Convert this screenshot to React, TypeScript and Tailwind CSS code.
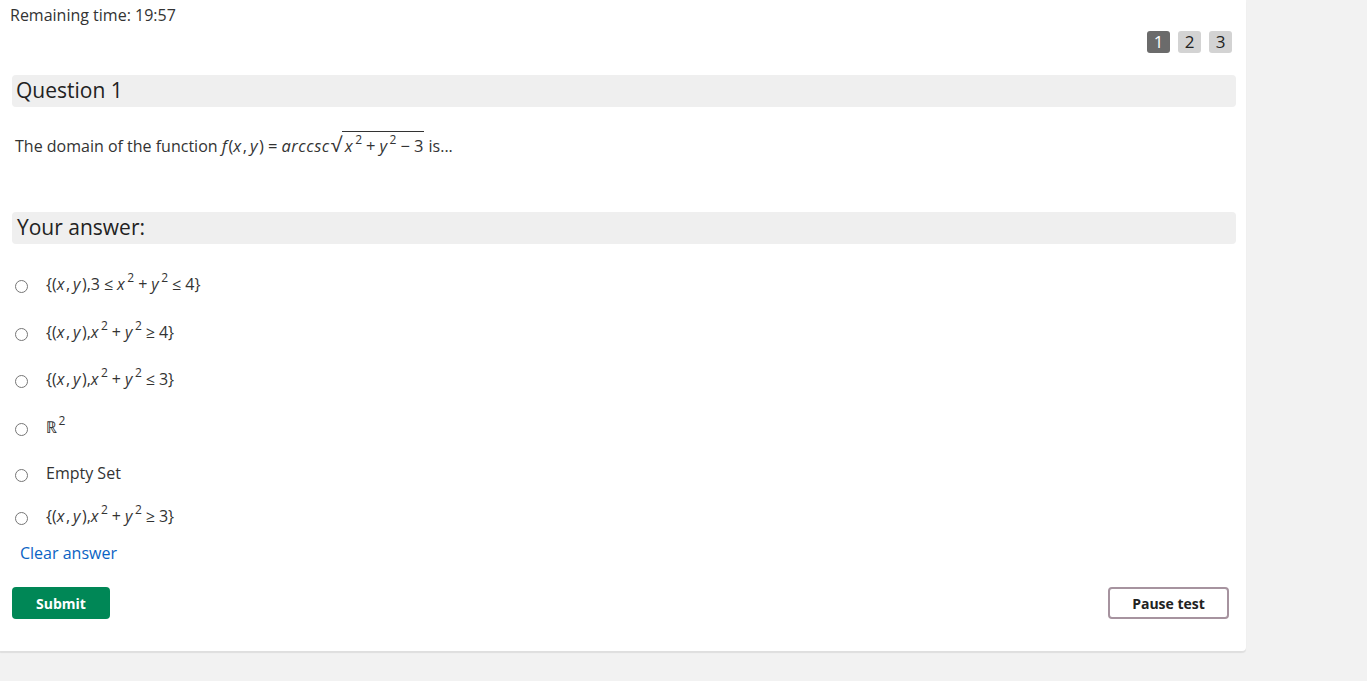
const font = { fontFamily: '"Open Sans", "Noto Sans", sans-serif' }

function V({ children }: { children: React.ReactNode }) {
  return <i className="pr-[1px] italic tracking-[0.5px]">{children}</i>
}

function Op({ children }: { children: React.ReactNode }) {
  return <span className="mx-[4px]">{children}</span>
}

function Sq() {
  return <span className="relative top-[-6px] ml-[1px] inline-block text-[12px] leading-none">2</span>
}

function XY() {
  return (
    <>
      {'{'}(<V>x</V>,<span className="ml-[3px]" />
      <V>y</V>),
    </>
  )
}

function Radio() {
  return <span className="inline-block h-[13px] w-[13px] shrink-0 rounded-full border border-[#767676] bg-white" />
}

const options: { gap: string; body: React.ReactNode }[] = [
  {
    gap: 'mt-0',
    body: (
      <>
        <XY />3<Op>≤</Op>
        <V>x</V>
        <Sq />
        <Op>+</Op>
        <V>y</V>
        <Sq />
        <Op>≤</Op>4{'}'}
      </>
    ),
  },
  {
    gap: 'mt-[20px]',
    body: (
      <>
        <XY />
        <V>x</V>
        <Sq />
        <Op>+</Op>
        <V>y</V>
        <Sq />
        <Op>≥</Op>4{'}'}
      </>
    ),
  },
  {
    gap: 'mt-[19px]',
    body: (
      <>
        <XY />
        <V>x</V>
        <Sq />
        <Op>+</Op>
        <V>y</V>
        <Sq />
        <Op>≤</Op>3{'}'}
      </>
    ),
  },
  {
    gap: 'mt-[20px]',
    body: (
      <>
        ℝ<Sq />
      </>
    ),
  },
  { gap: 'mt-[18px]', body: <span>Empty Set</span> },
  {
    gap: 'mt-[15px]',
    body: (
      <>
        <XY />
        <V>x</V>
        <Sq />
        <Op>+</Op>
        <V>y</V>
        <Sq />
        <Op>≥</Op>3{'}'}
      </>
    ),
  },
]

export default function App() {
  return (
    <div className="min-h-[681px] w-full bg-[#f2f2f2] text-[#333]" style={font}>
      <div className="w-[1246px] rounded-br bg-white pb-[32px] pl-[12px] pr-[10px] pt-[3px] shadow-[0_2px_1px_rgba(0,0,0,0.08)]">
        <div className="-ml-[2px] text-[16px] leading-[24px]">Remaining time: 19:57</div>

        <div className="mt-[4px] flex justify-end gap-[8px] pr-[4px]">
          {['1', '2', '3'].map((n, i) => (
            <span
              key={n}
              className={
                i === 0
                  ? 'flex h-[22px] w-[23px] items-center justify-center rounded-[3px] bg-[#6b6b6b] text-[17px] text-white'
                  : 'flex h-[22px] w-[23px] items-center justify-center rounded-[3px] bg-[#d3d3d3] text-[17px] text-[#222]'
              }
            >
              {n}
            </span>
          ))}
        </div>

        <div className="mt-[22px] flex h-[32px] items-center rounded-[4px] bg-[#efefef] px-[4px] text-[21px] text-[#222]">
          Question 1
        </div>

        <div className="mt-[24px] flex items-end px-[3px] text-[16px] leading-[22px]">
          <span>The domain of the function&nbsp;</span>
          <span className="flex items-end whitespace-nowrap text-[16.5px] leading-[22px]">
            <V>f</V>
            <span>(</span>
            <V>x</V>,<span className="ml-[3px]" />
            <V>y</V>)<Op>=</Op>
            <V>arccsc</V>
            <span className="relative top-[1px] text-[20px] leading-[26px]">√</span>
            <span className="flex items-center border-t border-[#333] pl-[3px] pr-[1px] pt-[3px] leading-[22px]">
              <V>x</V>
              <Sq />
              <Op>+</Op>
              <V>y</V>
              <Sq />
              <Op>−</Op>3
            </span>
          </span>
          <span>&nbsp;is...</span>
        </div>

        <div className="mt-[55px] flex h-[32px] items-center rounded-[4px] bg-[#efefef] px-[5px] text-[21px] text-[#222]">
          Your answer:
        </div>

        <div className="mt-[26px] flex flex-col pl-[3px]">
          {options.map((o, i) => (
            <label key={i} className={`${o.gap} flex h-[28px] items-center gap-[18px] text-[16px] text-[#333]`}>
              <span className="mt-[5px] flex">
                <Radio />
              </span>
              <span className="flex items-center whitespace-nowrap leading-[24px]">{o.body}</span>
            </label>
          ))}
        </div>

        <div className="mt-[12px] pl-[8px] text-[16px] leading-[22px] text-[#0a63c4]">Clear answer</div>

        <div className="mt-[23px] flex items-center justify-between pr-[7px]">
          <button className="h-[32px] w-[98px] rounded-[4px] bg-[#008756] text-[14px] font-bold text-white">
            Submit
          </button>
          <button className="h-[32px] w-[121px] rounded-[4px] border-2 border-[#a6939f] bg-white text-[14px] font-bold text-[#222]">
            Pause test
          </button>
        </div>
      </div>
    </div>
  )
}
